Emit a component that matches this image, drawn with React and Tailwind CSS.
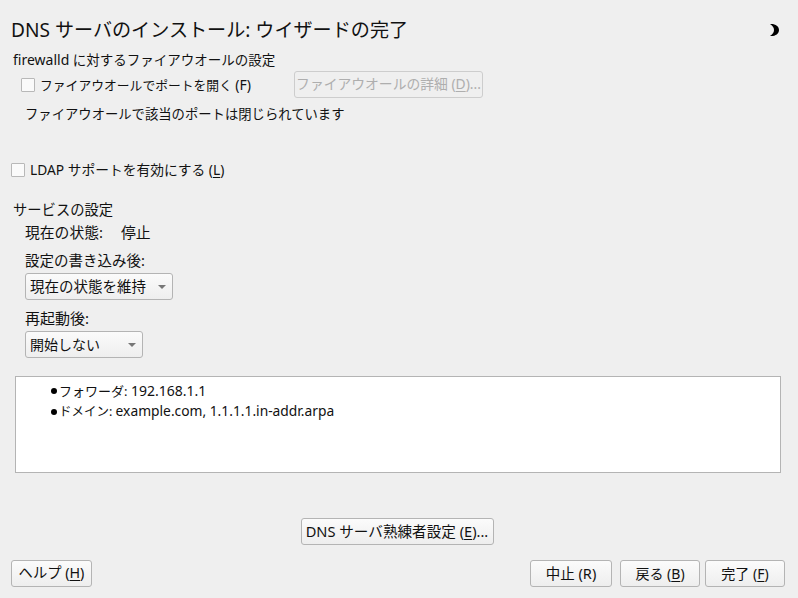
const font = "font-['Noto_Sans','Noto_Sans_CJK_JP',sans-serif]";

const Mnemonic = ({ children }) => <span className="underline underline-offset-2">{children}</span>;

const Button = ({ className = "", disabled, children }) => (
  <button
    disabled={disabled}
    className={`h-[27px] flex items-center justify-center shrink-0 whitespace-nowrap rounded-[3px] border ${
      disabled
        ? "border-[#cdcdcd] bg-[#efefef] text-[#aeaeae]"
        : "border-[#b4b4b4] bg-gradient-to-b from-[#fbfbfb] to-[#eeeeee] text-[#111111]"
    } ${className}`}
  >
    {children}
  </button>
);

const Checkbox = () => <span className="block w-[14px] h-[14px] shrink-0 border border-[#b8b8b8] bg-[#fafafa] rounded-[1px]" />;

const Select = ({ className = "", gap, children }) => (
  <div className={`h-[27px] flex items-center pl-[4px] rounded-[3px] border border-[#b4b4b4] bg-gradient-to-b from-[#fbfbfb] to-[#eeeeee] text-[#111111] whitespace-nowrap ${className}`}>
    <span className={gap}>{children}</span>
    <span className="w-0 h-0 border-x-[4px] border-x-transparent border-t-[4px] border-t-[#777777]" />
  </div>
);

export default function App() {
  return (
    <div className={`${font} w-[798px] h-[598px] bg-[#efefef] text-[#111111] text-[13.33px] overflow-hidden flex flex-col pt-[15px] pb-[11px] pl-[11px] pr-[13px]`}>
      <div className="flex items-center justify-between h-[30px]">
        <h1 className="text-[19.1px] font-normal leading-[30px]">DNS サーバのインストール: ウイザードの完了</h1>
        <svg width="12" height="14" viewBox="0 0 12 14" className="mr-[5px]">
          <path d="M2 1 C7 0.5 11 3 11 7 C11 11 7 13.5 2 13 C5 11 6 9 6 7 C6 5 5 3 2 1 Z" fill="#000" />
        </svg>
      </div>

      <div className="pl-[2px] mt-[5px] leading-5 text-[13.5px]"><span className="text-sm">firewalld</span> に対するファイアウオールの設定</div>
      <div className="flex items-center pl-[10px] mt-[1px]">
        <Checkbox />
        <span className="ml-[5px] w-[254px] leading-5 text-[12.8px]">ファイアウオールでポートを開く <span className="text-sm">(F)</span></span>
        <Button disabled className="w-[189px] text-[13.8px]">ファイアウオールの詳細 (<Mnemonic>D</Mnemonic>)...</Button>
      </div>
      <div className="pl-[14px] mt-[6px] leading-5">ファイアウオールで該当のポートは閉じられています</div>

      <div className="flex items-center mt-[36px]">
        <Checkbox />
        <span className="ml-[5px] leading-5 text-[13.75px]">LDAP サポートを有効にする (<Mnemonic>L</Mnemonic>)</span>
      </div>

      <div className="pl-[2px] mt-[20px] leading-5 text-[14.3px]">サービスの設定</div>
      <div className="pl-[14px] mt-[2px] flex leading-5 text-[14.8px]">
        <span className="w-[96px]">現在の状態:</span>
        <span>停止</span>
      </div>
      <div className="pl-[14px] mt-[8px] leading-5 text-[14.5px]">設定の書き込み後:</div>
      <div className="pl-[14px] mt-[3px]">
        <Select className="w-[148px] text-[14.5px]" gap="w-[128px]">現在の状態を維持</Select>
      </div>
      <div className="pl-[14px] mt-[8px] leading-5 text-[15px]">再起動後:</div>
      <div className="pl-[14px] mt-[3px]">
        <Select className="w-[118px] text-sm" gap="w-[98px]">開始しない</Select>
      </div>

      <div className="ml-[4px] mt-[18px] h-[98px] w-[766px] border border-[#b4b4b4] bg-white pt-[4px] pl-[35px] leading-5">
        <div className="flex items-center text-[13px]">
          <span className="w-[6px] h-[6px] rounded-full bg-black mr-[2px]" />
          <span className="whitespace-pre">フォワーダ: <span className="text-sm">192.168.1.1</span></span>
        </div>
        <div className="flex items-center text-[12.5px]">
          <span className="w-[6px] h-[6px] rounded-full bg-black mr-[2px]" />
          <span className="whitespace-pre">ドメイン: <span className="text-[13.8px]">example.com, 1.1.1.1.in-addr.arpa</span></span>
        </div>
      </div>

      <div className="flex justify-center mt-[45px] pr-[2px]">
        <Button className="w-[193px] text-[14.6px]">DNS サーバ熟練者設定 (<Mnemonic>E</Mnemonic>)...</Button>
      </div>

      <div className="flex mt-[15px] text-sm">
        <Button className="w-[81px] text-[14.3px]">ヘルプ (<Mnemonic>H</Mnemonic>)</Button>
        <div className="flex-1" />
        <Button className="w-[82px] text-[14.5px]">中止 (R)</Button>
        <Button className="w-[80px] ml-[8px]">戻る (<Mnemonic>B</Mnemonic>)</Button>
        <Button className="w-[80px] ml-[5px]">完了 (<Mnemonic>F</Mnemonic>)</Button>
      </div>
    </div>
  );
}
